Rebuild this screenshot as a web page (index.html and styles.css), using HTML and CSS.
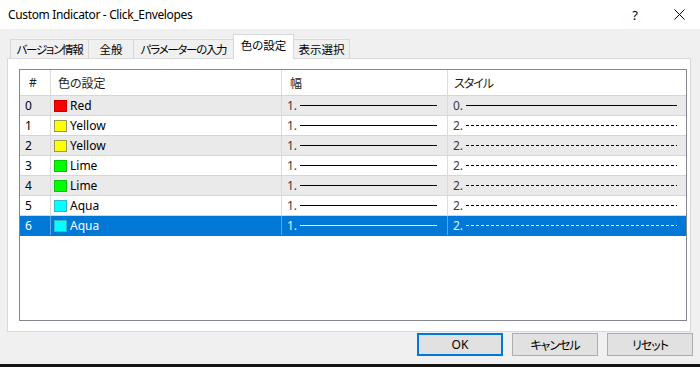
FILE: index.html
```html
<!DOCTYPE html>
<html lang="ja">
<head>
<meta charset="utf-8">
<title>Custom Indicator - Click_Envelopes</title>
<link rel="stylesheet" href="styles.css">
</head>
<body>
<div class="dialog">
  <div class="titlebar">
    <span class="title">Custom Indicator - Click_Envelopes</span>
    <span class="help">?</span>
    <span class="close"><svg width="11" height="11" viewBox="0 0 11 11"><path d="M0.5 0.5 L10.5 10.5 M10.5 0.5 L0.5 10.5" stroke="#000" stroke-width="1" fill="none"/></svg></span>
  </div>
  <div class="main">
    <div class="tabs">
      <div class="tab t1 kana">バージョン情報</div>
      <div class="tab t2">全般</div>
      <div class="tab t3 kana">パラメーターの入力</div>
      <div class="tab t4 active">色の設定</div>
      <div class="tab t5">表示選択</div>
    </div>
    <div class="panel">
      <div class="list">
        <div class="row head">
          <div class="cell c-idx">#</div>
          <div class="cell c-color">色の設定</div>
          <div class="cell c-width">幅</div>
          <div class="cell c-style kana">スタイル</div>
        </div>
        <div class="row alt">
          <div class="cell c-idx">0</div>
          <div class="cell c-color"><span class="sw red"></span>Red</div>
          <div class="cell c-width"><span class="num">1.</span><span class="ln"></span></div>
          <div class="cell c-style"><span class="num">0.</span><span class="ln"></span></div>
        </div>
        <div class="row">
          <div class="cell c-idx">1</div>
          <div class="cell c-color"><span class="sw yellow"></span>Yellow</div>
          <div class="cell c-width"><span class="num">1.</span><span class="ln"></span></div>
          <div class="cell c-style"><span class="num">2.</span><span class="ln dash"></span></div>
        </div>
        <div class="row alt">
          <div class="cell c-idx">2</div>
          <div class="cell c-color"><span class="sw yellow"></span>Yellow</div>
          <div class="cell c-width"><span class="num">1.</span><span class="ln"></span></div>
          <div class="cell c-style"><span class="num">2.</span><span class="ln dash"></span></div>
        </div>
        <div class="row">
          <div class="cell c-idx">3</div>
          <div class="cell c-color"><span class="sw lime"></span>Lime</div>
          <div class="cell c-width"><span class="num">1.</span><span class="ln"></span></div>
          <div class="cell c-style"><span class="num">2.</span><span class="ln dash"></span></div>
        </div>
        <div class="row alt">
          <div class="cell c-idx">4</div>
          <div class="cell c-color"><span class="sw lime"></span>Lime</div>
          <div class="cell c-width"><span class="num">1.</span><span class="ln"></span></div>
          <div class="cell c-style"><span class="num">2.</span><span class="ln dash"></span></div>
        </div>
        <div class="row">
          <div class="cell c-idx">5</div>
          <div class="cell c-color"><span class="sw aqua"></span>Aqua</div>
          <div class="cell c-width"><span class="num">1.</span><span class="ln"></span></div>
          <div class="cell c-style"><span class="num">2.</span><span class="ln dash"></span></div>
        </div>
        <div class="row selected">
          <div class="cell c-idx">6</div>
          <div class="cell c-color"><span class="sw aqua"></span>Aqua</div>
          <div class="cell c-width"><span class="num">1.</span><span class="ln"></span></div>
          <div class="cell c-style"><span class="num">2.</span><span class="ln dash"></span></div>
        </div>
      </div>
    </div>
    <div class="buttons">
      <div class="btn default">OK</div>
      <div class="btn kana">キャンセル</div>
      <div class="btn kana">リセット</div>
    </div>
  </div>
</div>
</body>
</html>
```
FILE: styles.css
```css
html, body {
  margin: 0;
  padding: 0;
  height: 367px;
  overflow: hidden;
  background: #141414;
}

.dialog {
  height: 364px;
  display: flex;
  flex-direction: column;
  background: #f0f0f0;
  font-family: "Noto Sans", "Noto Sans CJK JP", sans-serif;
  font-size: 12px;
  font-feature-settings: "palt";
  color: #000;
}

.kana {
  letter-spacing: -1px;
}

.titlebar {
  height: 29px;
  flex: none;
  background: #fff;
  display: flex;
  align-items: center;
  padding-left: 8px;
  padding-right: 6px;
}

.title {
  flex: 1;
  color: #000;
  letter-spacing: -0.35px;
}

.help {
  width: 24px;
  text-align: center;
  font-size: 13px;
  margin-right: 17px;
}

.close {
  width: 30px;
  display: flex;
  justify-content: center;
  align-items: center;
}

.main {
  flex: 1;
  display: flex;
  flex-direction: column;
  padding: 5px 8px 8px 7px;
}

.tabs {
  height: 24px;
  display: flex;
  align-items: flex-end;
  margin-left: 3px;
  position: relative;
  z-index: 1;
}

.tab {
  box-sizing: border-box;
  height: 19px;
  border: 1px solid #d9d9d9;
  border-bottom: none;
  background: #f0f0f0;
  display: flex;
  align-items: center;
  justify-content: center;
  margin-left: -1px;
  color: #000;
  white-space: nowrap;
  font-size: 11.5px;
}

.tab.kana {
  letter-spacing: -1.3px;
}

.t1 { width: 79px; margin-left: 0; }
.t2 { width: 46px; }
.t3 { width: 101px; }
.t4 { width: 61px; }
.t5 { width: 57px; }

.tab.active {
  height: 25px;
  margin-bottom: -1px;
  background: #fff;
  padding-bottom: 4px;
}

.panel {
  box-sizing: border-box;
  height: 274px;
  margin-right: 1px;
  border: 1px solid #d9d9d9;
  background: #fff;
  padding: 10px 3px 10px 11px;
}

.list {
  box-sizing: border-box;
  height: 252px;
  border: 1px solid #828790;
  background: #fff;
}

.row {
  box-sizing: border-box;
  display: grid;
  grid-template-columns: 31px 231px 166px 1fr;
  height: 20px;
  border-bottom: 1px solid #d6d6d6;
}

.row.head {
  height: 26px;
  border-bottom: 1px solid #d6d6d6;
  color: #1e1e1e;
}

.row.alt {
  background: #eaeaea;
}

.row.selected {
  background: #0078d7;
  color: #fff;
  border-bottom-color: #0078d7;
}

.cell {
  display: flex;
  align-items: center;
  overflow: hidden;
  white-space: nowrap;
}

.c-idx, .c-color, .c-width {
  border-right: 1px solid #dcdcdc;
}

.row.selected .cell {
  border-right-color: #5aa6e6;
}

.head .c-idx { padding-left: 9px; }
.head .c-color { padding-left: 7px; }
.head .c-width { padding-left: 8px; }
.head .c-style { padding-left: 6px; }

.c-idx { padding-left: 5px; }
.c-color { padding-left: 3px; }
.c-width { padding-left: 5px; padding-right: 10px; }
.c-style { padding-left: 5px; padding-right: 9px; }

.sw {
  box-sizing: border-box;
  width: 13px;
  height: 12px;
  margin-right: 3px;
  border: 1px solid rgba(0, 0, 0, 0.28);
}

.sw.red { background: #ff0000; border-color: #c80000; }
.sw.yellow { background: #ffff00; border-color: #9a9a50; }
.sw.lime { background: #00ff00; border-color: #10c010; }
.sw.aqua { background: #00ffff; border-color: #30b8c8; }

.num {
  width: 13px;
  flex: none;
  color: #3c3c3c;
}

.selected .num {
  color: #e6f1fb;
}

.ln {
  flex: 1;
  height: 1px;
  background: #000;
}

.ln.dash {
  background: repeating-linear-gradient(90deg, #000 0 3px, transparent 3px 5px);
}

.selected .ln {
  background: #fff;
}

.selected .ln.dash {
  background: repeating-linear-gradient(90deg, #fff 0 3px, transparent 3px 5px);
}

.buttons {
  display: flex;
  justify-content: flex-end;
  gap: 9px;
  margin-top: 1px;
  margin-right: -1px;
}

.btn {
  box-sizing: border-box;
  width: 86px;
  height: 23px;
  background: #e1e1e1;
  border: 1px solid #adadad;
  display: flex;
  align-items: center;
  justify-content: center;
  color: #000;
}

.btn.default {
  border: 2px solid #0078d7;
}
```
